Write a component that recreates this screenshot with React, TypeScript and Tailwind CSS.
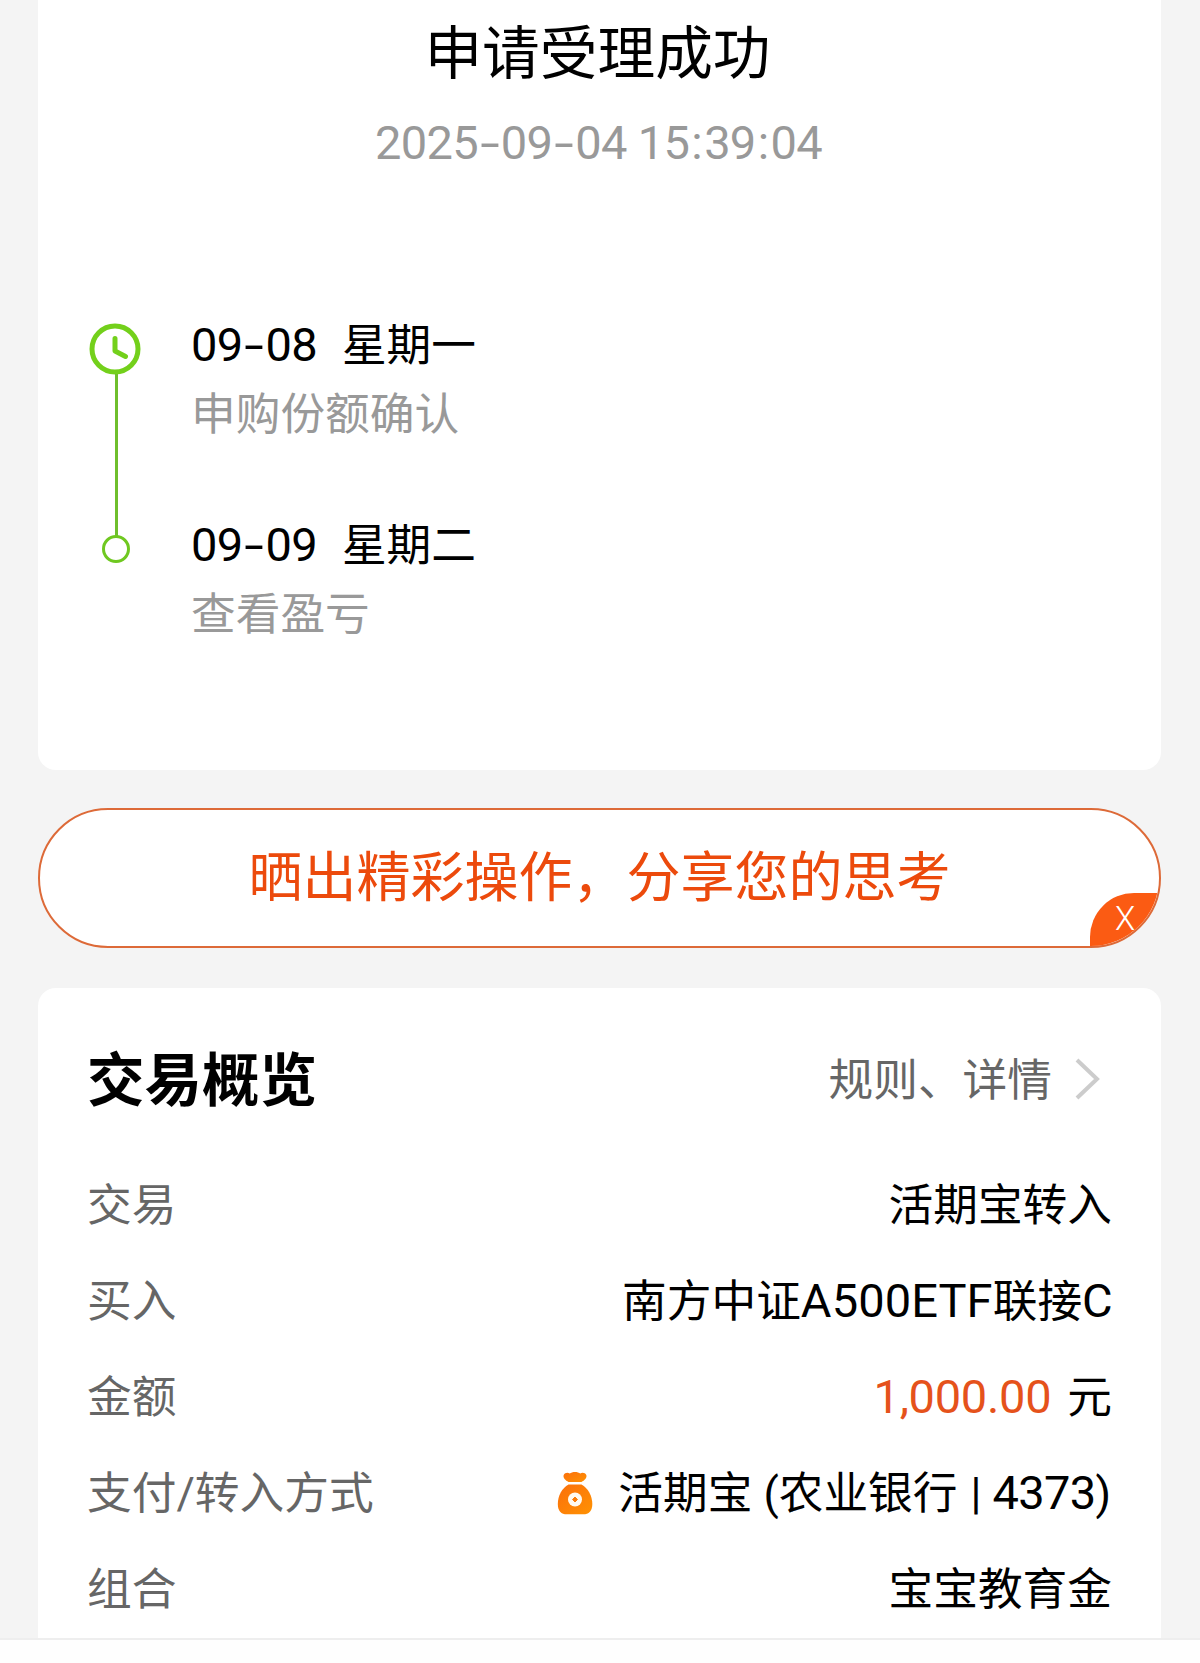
import React from 'react';
import { clsx } from 'clsx';

const steps = [
  { date: '09-08', weekday: '星期一', label: '申购份额确认' },
  { date: '09-09', weekday: '星期二', label: '查看盈亏' },
];

// Latin digits run a touch larger than the Chinese text, with a wide dash and colon
function Digits({ text, className = 'tracking-[-0.7px]' }: { text: string; className?: string }) {
  return (
    <span className={clsx('text-[47px] leading-none', className)}>
      {text.split('').map((ch, i) => {
        if (ch === '-') return <span key={i} className="inline-block w-[23px] text-center scale-x-[1.5]">-</span>;
        if (ch === ':') return <span key={i} className="inline-block w-[15px] text-center">:</span>;
        return <React.Fragment key={i}>{ch}</React.Fragment>;
      })}
    </span>
  );
}

function ClockIcon() {
  return (
    <svg className="-ml-[2px]" width="52" height="52" viewBox="0 0 52 52" fill="none" stroke="#73d01b" strokeLinecap="round" strokeLinejoin="round">
      <circle cx="26" cy="26" r="23" strokeWidth="5" />
      <path d="M26 15.500v12.500l10.500 5.500" strokeWidth="5" />
    </svg>
  );
}

function MoneyBag() {
  return (
    <svg className="-mt-[3px]" width="36" height="44" viewBox="0 0 36 44">
      <defs>
        <linearGradient id="bag" x1="0" y1="0" x2="1" y2="1">
          <stop offset="0" stopColor="#fb6f0c" />
          <stop offset="1" stopColor="#ff9202" />
        </linearGradient>
      </defs>
      <path d="M11.500 11C8.500 9.500 5.700 6.500 6.700 4c1-2.200 4-2.700 6-1.500C15 .4 21 .4 23.300 2.500c2-1.200 5-.7 6 1.500 1 2.500-1.800 5.500-4.800 7z" fill="url(#bag)" />
      <path d="M11.500 13.500h13C31 17 35.300 25 35.300 33c0 7-3.300 10.300-9.300 10.300H10C4 43.300.8 40 .8 33c0-8 4.200-16 10.700-19.500z" fill="url(#bag)" />
      <circle cx="18" cy="28.500" r="7" fill="#fffaf0" />
      <path d="M18 26l2.500 2.500-2.500 2.500-2.500-2.500z" fill="#fb7d0a" stroke="#fb7d0a" strokeLinejoin="round" />
    </svg>
  );
}

function Row({ label, children }: { label: string; children: React.ReactNode }) {
  return (
    <div className="flex h-24 items-center justify-between">
      <span className="text-[#666]">{label}</span>
      <div className="text-black">{children}</div>
    </div>
  );
}

export default function App() {
  return (
    <div className="flex h-[1663px] w-[1200px] flex-col overflow-hidden bg-[#fefefe] font-['Roboto','Noto_Sans_CJK_SC',sans-serif] text-[44.700px] leading-[60px] whitespace-nowrap">
      <div className="flex h-[1640px] flex-col overflow-hidden border-b-2 border-[#eee] bg-[#f4f4f4] pr-[39px] pl-[38px]">
        <section className="h-[770px] shrink-0 rounded-b-[18px] bg-white">
          <h1 className="pt-[14px] pr-[4px] text-center text-[57.700px] leading-[80px] text-black">申请受理成功</h1>
          <div className="mt-5 pr-[2px] text-center text-[#999]">
            <Digits text="2025-09-04 15:39:04" className="tracking-[-0.7px]" />
          </div>

          <div className="mt-[143px] flex pl-[50px]">
            <div className="flex w-14 flex-col items-center pt-[6px]">
              <ClockIcon />
              <div className="-mt-px h-[162px] w-[3px] bg-[#6fbf2d]" />
              <div className="-mt-px size-7 rounded-full border-[3px] border-[#6fc820]" />
            </div>
            <div className="-mt-px pl-[47px]">
              {steps.map((s) => (
                <div key={s.date} className="h-[200px]">
                  <div className="h-[69px] text-black">
                    <Digits text={s.date} />
                    <span className="ml-[25px]">{s.weekday}</span>
                  </div>
                  <div className="text-[#999]">{s.label}</div>
                </div>
              ))}
            </div>
          </div>
        </section>

        <button className="relative mt-[38px] h-[140px] shrink-0 overflow-hidden rounded-full border-2 border-[#dd6a38] bg-white pt-[2px] text-[54px] text-[#ec4a0c]">
          晒出精彩操作，分享您的思考
          <span className="absolute -right-px bottom-0 flex h-[53px] w-[70px] items-center rounded-tl-[44px] bg-[#fb5b13] pb-[2px] pl-[25px] text-[33px] font-light text-white">
            X
          </span>
        </button>

        <section className="mt-10 h-[700px] shrink-0 rounded-t-[18px] bg-white px-[49px] pt-[50px]">
          <div className="flex h-20 items-center justify-between">
            <h2 className="pt-[7px] text-[57.500px] font-bold text-black">交易概览</h2>
            <div className="flex items-center pr-[11px] text-[#666]">
              <span className="pt-[5px]">规则、详情</span>
              <svg className="mt-px ml-[23px]" width="26" height="42" viewBox="0 0 26 42" fill="none" stroke="#ccc" strokeWidth="4">
                <path d="M2 2l20 19L2 40" />
              </svg>
            </div>
          </div>
          <div className="mt-10">
            <Row label="交易">活期宝转入</Row>
            <Row label="买入">
              南方中证<Digits text="A500ETF" className="tracking-[0.1px]" />联接<Digits text="C" />
            </Row>
            <Row label="金额">
              <Digits text="1,000.00" className="mr-4 tracking-[-0.3px] text-[#e5521b]" />元
            </Row>
            <Row label="支付/转入方式">
              <div className="flex items-center">
                <MoneyBag />
                <span className="ml-[25px] pr-px whitespace-pre">
                  活期宝 (农业银行 <span className="ml-[2px]">|</span> <Digits text="4373" />)
                </span>
              </div>
            </Row>
            <Row label="组合">宝宝教育金</Row>
          </div>
        </section>
      </div>
    </div>
  );
}
